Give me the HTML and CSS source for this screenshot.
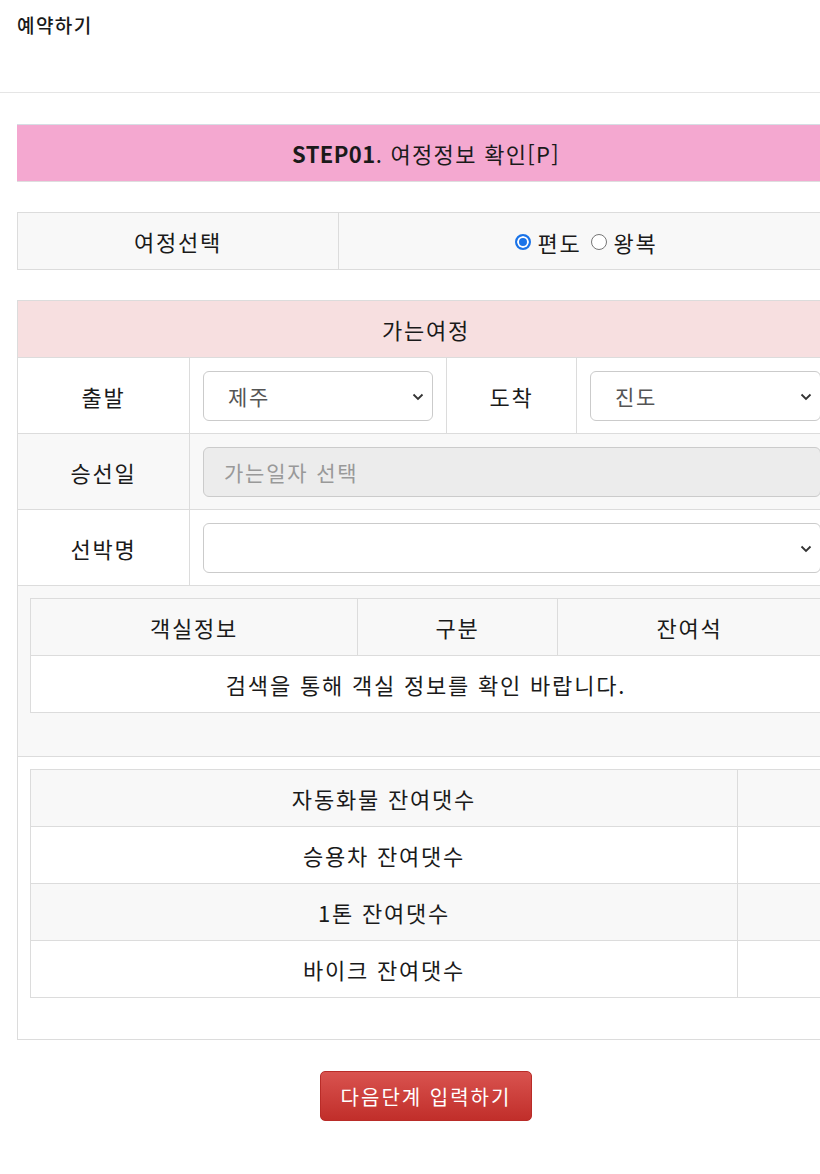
FILE: index.html
```html
<!DOCTYPE html>
<html lang="ko">
<head>
  <meta charset="UTF-8">
  <meta name="viewport" content="width=device-width, initial-scale=1.0">
  <title>예약하기</title>
  <link rel="stylesheet" href="styles.css">
</head>
<body>
  <header class="page-head">
    <h1>예약하기</h1>
  </header>

  <main class="wrap">
    <div class="step-bar"><b>STEP01</b>. 여정정보 확인[P]</div>

    <table class="tbl trip-type">
      <tr>
        <td class="col-label">여정선택</td>
        <td>
          <label class="radio"><span class="dot on"></span>편도</label>
          <label class="radio"><span class="dot"></span>왕복</label>
        </td>
      </tr>
    </table>

    <table class="tbl trip">
      <colgroup>
        <col class="w-lbl">
        <col class="w-half">
        <col class="w-lbl2">
        <col>
      </colgroup>
      <thead>
        <tr><th colspan="4" class="trip-head">가는여정</th></tr>
      </thead>
      <tbody>
        <tr class="form-row">
          <td class="lbl">출발</td>
          <td class="fld">
            <div class="select"><span>제주</span><svg viewBox="0 0 12 8"><path d="M1.5 1.5 6 6l4.5-4.5"/></svg></div>
          </td>
          <td class="lbl">도착</td>
          <td class="fld">
            <div class="select"><span>진도</span><svg viewBox="0 0 12 8"><path d="M1.5 1.5 6 6l4.5-4.5"/></svg></div>
          </td>
        </tr>
        <tr class="form-row grey">
          <td class="lbl">승선일</td>
          <td class="fld" colspan="3">
            <div class="input disabled">가는일자 선택</div>
          </td>
        </tr>
        <tr class="form-row">
          <td class="lbl">선박명</td>
          <td class="fld" colspan="3">
            <div class="select"><span></span><svg viewBox="0 0 12 8"><path d="M1.5 1.5 6 6l4.5-4.5"/></svg></div>
          </td>
        </tr>
        <tr class="grey">
          <td colspan="4" class="inner-cell room-cell">
            <table class="tbl inner">
              <colgroup>
                <col class="w-room">
                <col class="w-kind">
                <col>
              </colgroup>
              <tr class="grey">
                <td>객실정보</td>
                <td>구분</td>
                <td>잔여석</td>
              </tr>
              <tr class="white">
                <td colspan="3">검색을 통해 객실 정보를 확인 바랍니다.</td>
              </tr>
            </table>
          </td>
        </tr>
        <tr>
          <td colspan="4" class="inner-cell car-cell">
            <table class="tbl inner">
              <colgroup>
                <col class="w-car">
                <col>
              </colgroup>
              <tr class="grey"><td>자동화물 잔여댓수</td><td></td></tr>
              <tr class="white"><td>승용차 잔여댓수</td><td></td></tr>
              <tr class="grey"><td>1톤 잔여댓수</td><td></td></tr>
              <tr class="white"><td>바이크 잔여댓수</td><td></td></tr>
            </table>
          </td>
        </tr>
      </tbody>
    </table>

    <div class="actions">
      <button type="button" class="btn-next">다음단계 입력하기</button>
    </div>
  </main>
</body>
</html>
```

FILE: styles.css
```css
html, body {
  overflow-x: hidden;
}

body {
  margin: 0;
  font-family: "Noto Sans CJK KR", "Noto Sans", sans-serif;
  color: #1a1a1a;
  background: #fff;
  font-size: 22px;
  letter-spacing: 1.8px;
}

.page-head {
  height: 92px;
  border-bottom: 1px solid #e5e5e5;
  padding: 0 17px;
}

.page-head h1 {
  margin: 0;
  padding-top: 10px;
  font-size: 19px;
  font-weight: 500;
  line-height: 30px;
  letter-spacing: 1.4px;
}

.wrap {
  margin-left: 17px;
  width: 818px;
  padding-top: 31px;
}

.step-bar {
  background: #f4a8d0;
  border-top: 1px solid #d6dde4;
  border-bottom: 1px solid #dedede;
  height: 56px;
  line-height: 56px;
  text-align: center;
  letter-spacing: 1.3px;
}

.step-bar b {
  font-weight: 700;
  letter-spacing: 0.4px;
}

.tbl {
  width: 100%;
  border-collapse: collapse;
  table-layout: fixed;
}

.tbl td, .tbl th {
  border: 1px solid #dcdcdc;
  text-align: center;
  font-weight: 400;
  padding: 0;
}

.trip-type {
  margin-top: 30px;
  background: #f8f8f8;
}

.trip-type td {
  height: 56px;
}

.trip-type .col-label {
  width: 320px;
}

.radio {
  display: inline-flex;
  align-items: center;
  margin: 0 1px;
}

.dot {
  width: 16px;
  height: 16px;
  border: 1.5px solid #767676;
  border-radius: 50%;
  margin-right: 6px;
  box-sizing: border-box;
  background: #fff;
}

.dot.on {
  border: 2px solid #1a73e8;
  box-shadow: inset 0 0 0 2px #fff;
  background: #1a73e8;
}

.trip {
  margin-top: 30px;
}

.w-lbl { width: 172px; }
.w-half { width: 257px; }
.w-lbl2 { width: 130px; }
.w-room { width: 327px; }
.w-kind { width: 200px; }
.w-car { width: 707px; }

.trip-head {
  background: #f7dfe0;
  height: 56px;
}

.form-row td {
  height: 75px;
}

.tbl .fld {
  padding: 0 13px;
}

.grey, .grey td {
  background: #f8f8f8;
}

.white td {
  background: #fff;
}

.select, .input {
  height: 50px;
  border: 1px solid #cbcbcb;
  border-radius: 6px;
  box-sizing: border-box;
  display: flex;
  align-items: center;
  padding: 0 18px 0 24px;
  color: #555;
  font-size: 21px;
  text-align: left;
  background: #fff;
  position: relative;
}

.select span {
  flex: 1;
}

.select svg {
  width: 12px;
  height: 8px;
  fill: none;
  stroke: #333;
  stroke-width: 1.8;
  position: absolute;
  right: 8px;
  top: 21px;
}

.input.disabled {
  background: #ececec;
  color: #999;
  padding-left: 20px;
}

.tbl .inner-cell {
  padding: 12px 12px 0 12px;
  text-align: left;
  vertical-align: top;
}

.room-cell {
  height: 158px;
}

.car-cell {
  height: 270px;
}

.inner td {
  height: 56px;
}

.actions {
  text-align: center;
  padding-top: 31px;
}

.btn-next {
  font-family: inherit;
  font-size: 20px;
  letter-spacing: 2px;
  color: #fff;
  background: linear-gradient(#d9534f, #c12e2a);
  border: 1px solid #b92c28;
  border-radius: 5px;
  height: 50px;
  width: 212px;
  cursor: pointer;
}
```
